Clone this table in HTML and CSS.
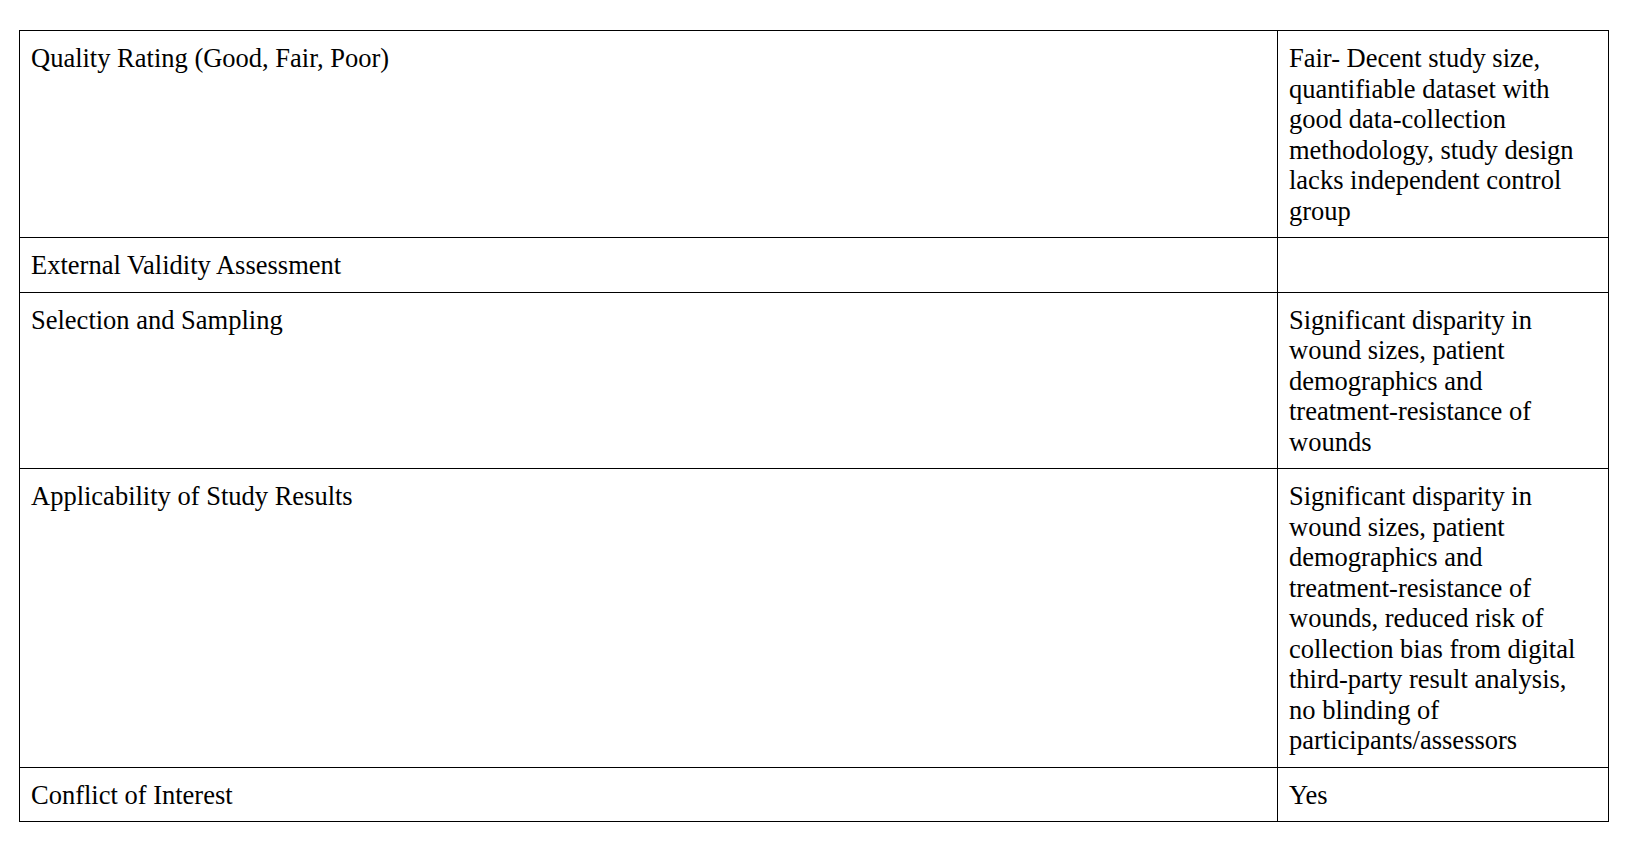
FILE: index.html
```html
<!DOCTYPE html>
<html>
<head>
<meta charset="utf-8">
<link rel="stylesheet" href="styles.css">
</head>
<body>
<table class="assess">
  <colgroup>
    <col class="c-label">
    <col class="c-value">
  </colgroup>
  <tbody>
    <tr>
      <td>Quality Rating (Good, Fair, Poor)</td>
      <td>Fair- Decent study size, quantifiable dataset with good data-collection methodology, study design lacks independent control group</td>
    </tr>
    <tr>
      <td>External Validity Assessment</td>
      <td></td>
    </tr>
    <tr>
      <td>Selection and Sampling</td>
      <td>Significant disparity in wound sizes, patient demographics and treatment-resistance of wounds</td>
    </tr>
    <tr>
      <td>Applicability of Study Results</td>
      <td>Significant disparity in wound sizes, patient demographics and treatment-resistance of wounds, reduced risk of collection bias from digital third-party result analysis, no blinding of participants/assessors</td>
    </tr>
    <tr>
      <td>Conflict of Interest</td>
      <td>Yes</td>
    </tr>
  </tbody>
</table>
</body>
</html>
```
FILE: styles.css
```css
html, body {
  margin: 0;
  padding: 0;
  background: #fff;
}
body {
  padding: 30px 0 0 19px;
  font-family: "Liberation Serif", "Times New Roman", serif;
  font-size: 26.5px;
  line-height: 30.5px;
  color: #000;
}
.assess {
  border-collapse: collapse;
  table-layout: fixed;
  width: 1589px;
}
.c-label { width: 1258px; }
.c-value { width: 331px; }
.assess td {
  border: 1px solid #000;
  padding: 12px 11px 11px 11px;
  vertical-align: top;
  text-align: left;
}
```
